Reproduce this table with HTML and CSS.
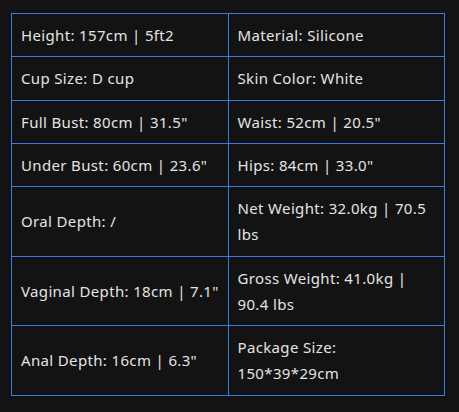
FILE: index.html
```html
<!DOCTYPE html>
<html>
<head>
<meta charset="utf-8">
<link rel="stylesheet" href="styles.css">
</head>
<body>
<table class="specs">
  <tr><td>Height: 157cm | 5ft2</td><td>Material: Silicone</td></tr>
  <tr><td>Cup Size: D cup</td><td>Skin Color: White</td></tr>
  <tr><td>Full Bust: 80cm | 31.5"</td><td>Waist: 52cm | 20.5"</td></tr>
  <tr><td>Under Bust: 60cm | 23.6"</td><td>Hips: 84cm | 33.0"</td></tr>
  <tr><td>Oral Depth: /</td><td>Net Weight: 32.0kg | 70.5 lbs</td></tr>
  <tr><td>Vaginal Depth: 18cm | 7.1"</td><td>Gross Weight: 41.0kg | 90.4 lbs</td></tr>
  <tr><td>Anal Depth: 16cm | 6.3"</td><td>Package Size: 150*39*29cm</td></tr>
</table>
</body>
</html>
```
FILE: styles.css
```css
html, body {
  margin: 0;
  background: #131313;
}
body {
  padding: 13px 0 0 11px;
  font-family: "Noto Sans", sans-serif;
  font-size: 15px;
  letter-spacing: 0.35px;
  color: #e4e4e4;
}
.specs {
  border-collapse: collapse;
  width: 434px;
  table-layout: fixed;
}
.specs td {
  border: 1px solid #3a7be0;
  padding: 8px 8px 8px 9px;
  line-height: 26.25px;
  vertical-align: middle;
}
```
